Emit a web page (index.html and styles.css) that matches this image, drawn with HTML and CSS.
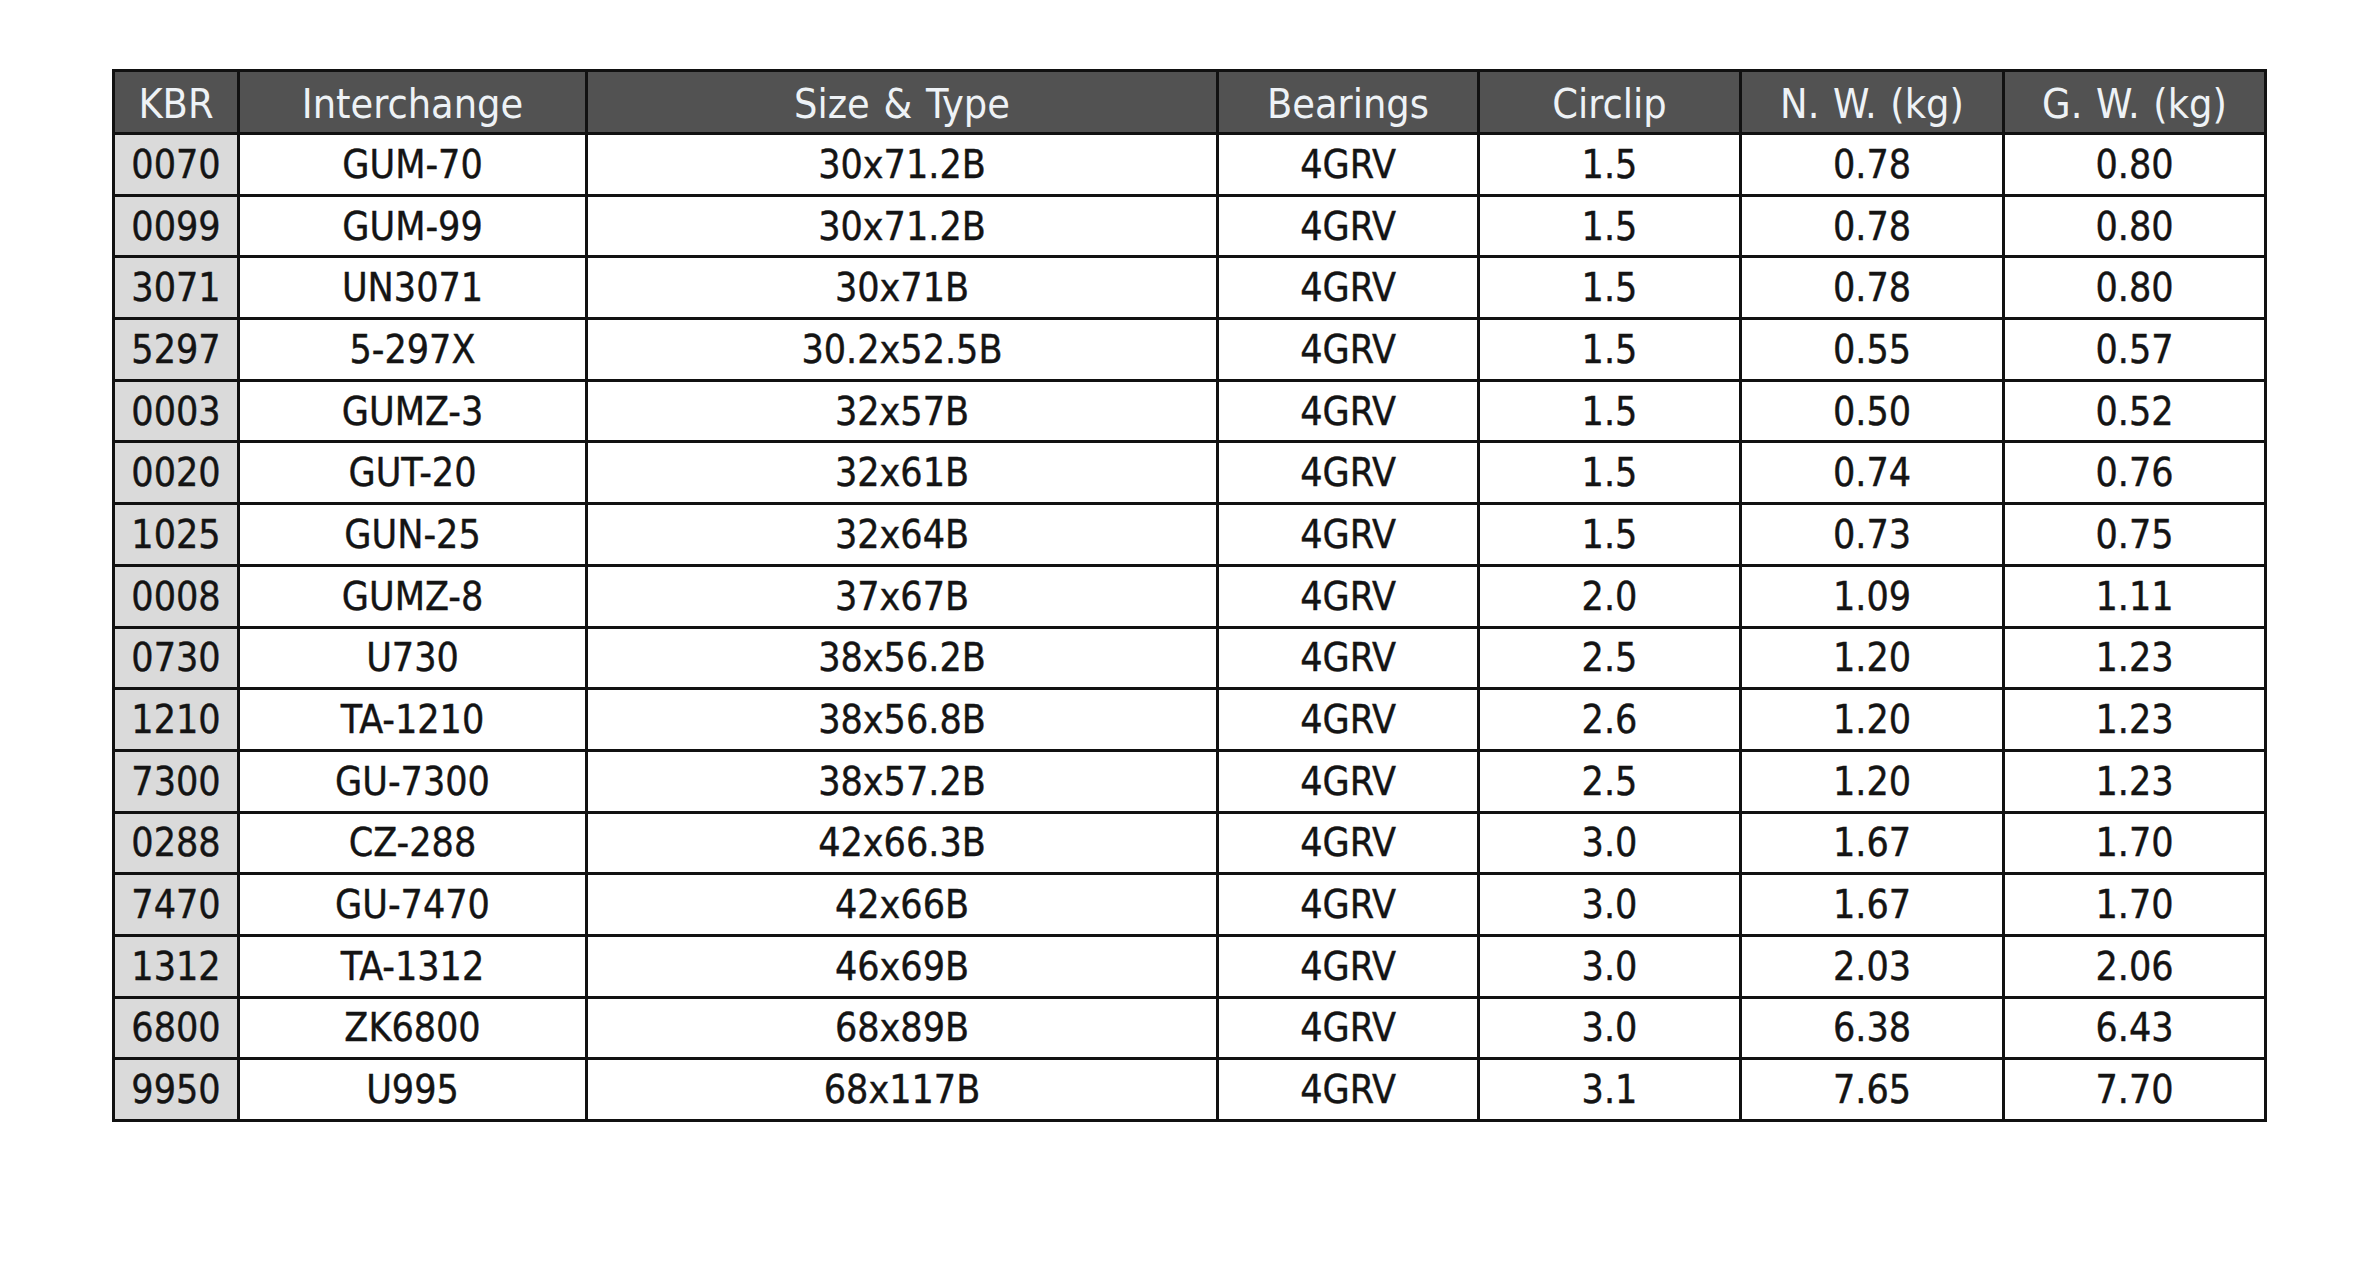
FILE: index.html
```html
<!DOCTYPE html>
<html>
<head>
<meta charset="utf-8">
<link rel="stylesheet" href="styles.css">
</head>
<body>
<main class="page">
<table class="spec">
<colgroup>
<col class="c-kbr"><col class="c-int"><col class="c-size"><col class="c-bear"><col class="c-clip"><col class="c-nw"><col class="c-gw">
</colgroup>
<thead>
<tr class="head"><th>KBR</th><th>Interchange</th><th>Size &amp; Type</th><th>Bearings</th><th>Circlip</th><th>N. W. (kg)</th><th>G. W. (kg)</th></tr>
</thead>
<tbody>
<tr><td class="kbr">0070</td><td>GUM-70</td><td>30x71.2B</td><td>4GRV</td><td>1.5</td><td>0.78</td><td>0.80</td></tr>
<tr><td class="kbr">0099</td><td>GUM-99</td><td>30x71.2B</td><td>4GRV</td><td>1.5</td><td>0.78</td><td>0.80</td></tr>
<tr><td class="kbr">3071</td><td>UN3071</td><td>30x71B</td><td>4GRV</td><td>1.5</td><td>0.78</td><td>0.80</td></tr>
<tr><td class="kbr">5297</td><td>5-297X</td><td>30.2x52.5B</td><td>4GRV</td><td>1.5</td><td>0.55</td><td>0.57</td></tr>
<tr><td class="kbr">0003</td><td>GUMZ-3</td><td>32x57B</td><td>4GRV</td><td>1.5</td><td>0.50</td><td>0.52</td></tr>
<tr><td class="kbr">0020</td><td>GUT-20</td><td>32x61B</td><td>4GRV</td><td>1.5</td><td>0.74</td><td>0.76</td></tr>
<tr><td class="kbr">1025</td><td>GUN-25</td><td>32x64B</td><td>4GRV</td><td>1.5</td><td>0.73</td><td>0.75</td></tr>
<tr><td class="kbr">0008</td><td>GUMZ-8</td><td>37x67B</td><td>4GRV</td><td>2.0</td><td>1.09</td><td>1.11</td></tr>
<tr><td class="kbr">0730</td><td>U730</td><td>38x56.2B</td><td>4GRV</td><td>2.5</td><td>1.20</td><td>1.23</td></tr>
<tr><td class="kbr">1210</td><td>TA-1210</td><td>38x56.8B</td><td>4GRV</td><td>2.6</td><td>1.20</td><td>1.23</td></tr>
<tr><td class="kbr">7300</td><td>GU-7300</td><td>38x57.2B</td><td>4GRV</td><td>2.5</td><td>1.20</td><td>1.23</td></tr>
<tr><td class="kbr">0288</td><td>CZ-288</td><td>42x66.3B</td><td>4GRV</td><td>3.0</td><td>1.67</td><td>1.70</td></tr>
<tr><td class="kbr">7470</td><td>GU-7470</td><td>42x66B</td><td>4GRV</td><td>3.0</td><td>1.67</td><td>1.70</td></tr>
<tr><td class="kbr">1312</td><td>TA-1312</td><td>46x69B</td><td>4GRV</td><td>3.0</td><td>2.03</td><td>2.06</td></tr>
<tr><td class="kbr">6800</td><td>ZK6800</td><td>68x89B</td><td>4GRV</td><td>3.0</td><td>6.38</td><td>6.43</td></tr>
<tr><td class="kbr">9950</td><td>U995</td><td>68x117B</td><td>4GRV</td><td>3.1</td><td>7.65</td><td>7.70</td></tr>
</tbody>
</table>
</main>
</body>
</html>
```

FILE: styles.css
```css
html, body {
  margin: 0;
  padding: 0;
  background: #ffffff;
}
.page {
  padding: 69px 0 0 112px;
}
.spec {
  border-collapse: collapse;
  table-layout: fixed;
  width: 2155px;
  font-family: "DejaVu Sans", sans-serif;
  font-stretch: condensed;
  color: #141414;
  border: 3px solid #111111;
}
.c-kbr { width: 125px; }
.c-int { width: 348px; }
.c-size { width: 631px; }
.c-bear { width: 261px; }
.c-clip { width: 262px; }
.c-nw { width: 263px; }
.c-gw { width: 262px; }
.spec th, .spec td {
  border: 3px solid #111111;
  padding: 0;
  text-align: center;
  vertical-align: middle;
  white-space: nowrap;
}
.spec tr { height: 61.7px; }
.spec .head { height: 63px; }
.spec th {
  background: #525252;
  color: #eef2f6;
  font-weight: normal;
  font-size: 41px;
  word-spacing: 2px;
  padding-top: 4px;
}
.spec td {
  font-size: 39px;
  -webkit-text-stroke: 0.4px #141414;
  background: #ffffff;
}
.spec td.kbr {
  background: #dadada;
}
```
